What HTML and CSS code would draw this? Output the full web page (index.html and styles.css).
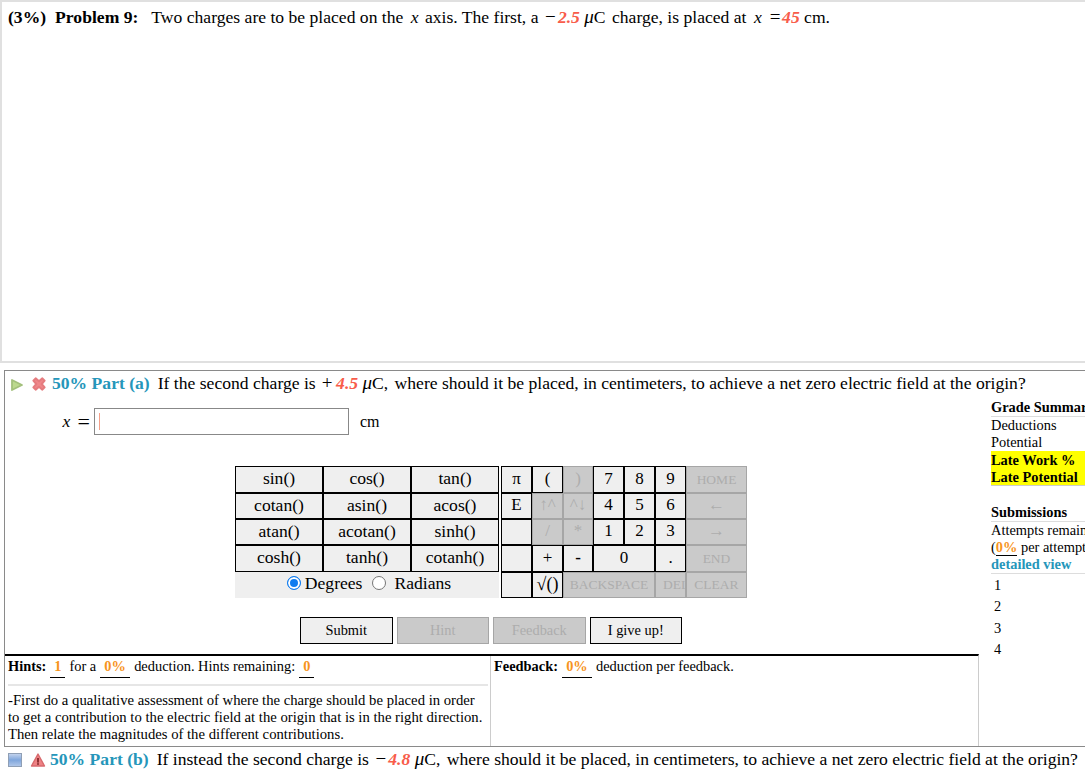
FILE: index.html
```html
<!DOCTYPE html>
<html lang="en">
<head>
<meta charset="utf-8">
<title>Problem 9</title>
<link rel="stylesheet" href="styles.css">
</head>
<body>
<div class="page">
  <section class="problem">
    <b class="pct">(3%)</b><b class="pname">Problem 9:</b><span class="ptext">Two charges are to be placed on the <i class="mx">x</i> axis. The first, a <span class="minus">−</span><i class="var">2.5</i> <span class="unit"><i class="mu">μ</i>C</span> charge, is placed at <i class="mx">x</i> <span class="eq">=</span><i class="var">45</i> cm.</span>
  </section>
  <section class="part">
    <div class="part-head">
      <svg class="icon-play" viewBox="0 0 14 14"><path d="M2 2 L12 7 L2 12 Z" fill="#bcd98e" stroke="#a3c07c" stroke-width="1.8" stroke-linejoin="round"/></svg>
      <svg class="icon-x" viewBox="0 0 16 16"><path d="M3 5 L5 3 L8 5.6 L11 3 L13 5 L10.4 8 L13 11 L11 13 L8 10.4 L5 13 L3 11 L5.6 8 Z" fill="#f0878a" stroke="#e57c7f" stroke-width="1.8" stroke-linejoin="round"/></svg>
      <b class="part-title">50% Part (a)</b><span class="part-q">If the second charge is <span class="plus">+</span><i class="var">4.5</i> <span class="unit"><i class="mu">μ</i>C,</span> where should it be placed, in centimeters, to achieve a net zero electric field at the origin?</span>
    </div>
    <div class="work">
      <div class="main">
        <div class="answer">
          <span class="ans-label"><i class="ans-x">x</i><span class="ans-eq">=</span></span>
          <div class="ans-input"><span class="caret"></span></div>
          <span class="ans-unit">cm</span>
        </div>
        <div class="calc">
          <div class="funcs">
            <div class="key">sin()</div><div class="key">cos()</div><div class="key">tan()</div>
            <div class="key">cotan()</div><div class="key">asin()</div><div class="key">acos()</div>
            <div class="key">atan()</div><div class="key">acotan()</div><div class="key">sinh()</div>
            <div class="key">cosh()</div><div class="key">tanh()</div><div class="key">cotanh()</div>
            <div class="modes">
              <span class="radio on"></span><span class="mode-a">Degrees</span><span class="radio"></span><span class="mode-b">Radians</span>
            </div>
          </div>
          <div class="pad">
            <div class="key">π</div><div class="key">(</div><div class="key off">)</div><div class="key">7</div><div class="key">8</div><div class="key">9</div><div class="key off small">HOME</div>
            <div class="key">E</div><div class="key off">↑^</div><div class="key off">^↓</div><div class="key">4</div><div class="key">5</div><div class="key">6</div><div class="key off">←</div>
            <div class="key"></div><div class="key off">/</div><div class="key off">*</div><div class="key">1</div><div class="key">2</div><div class="key">3</div><div class="key off">→</div>
            <div class="key"></div><div class="key">+</div><div class="key"><b>-</b></div><div class="key span2">0</div><div class="key">.</div><div class="key off small">END</div>
            <div class="key"></div><div class="key root">√()</div><div class="key off small span3">BACKSPACE</div><div class="key off small clip">DEL</div><div class="key off small">CLEAR</div>
          </div>
        </div>
        <div class="actions">
          <div class="btn">Submit</div>
          <div class="btn off">Hint</div>
          <div class="btn off">Feedback</div>
          <div class="btn">I give up!</div>
        </div>
        <div class="panes">
          <div class="pane-hints">
            <div class="pane-line"><b>Hints:</b><span class="blank">1</span>for a<span class="blank wide">0%</span>deduction. Hints remaining:<span class="blank">0</span></div>
            <hr class="rule">
            <p class="hint-text">-First do a qualitative assessment of where the charge should be placed in order to get a contribution to the electric field at the origin that is in the right direction. Then relate the magnitudes of the different contributions.</p>
          </div>
          <div class="pane-feedback">
            <div class="pane-line"><b>Feedback:</b><span class="blank wide">0%</span>deduction per feedback.</div>
          </div>
        </div>
      </div>
      <aside class="side">
        <div class="side-title">Grade Summary</div>
        <div class="side-row">Deductions</div>
        <div class="side-row">Potential</div>
        <div class="late"><div>Late Work %</div><div>Late Potential</div></div>
        <div class="side-title second">Submissions</div>
        <div class="side-row">Attempts remaining:</div>
        <div class="side-row">(<span class="side-pct">0%</span> per attempt)</div>
        <div class="side-link">detailed view</div>
        <div class="attempt">1</div>
        <div class="attempt">2</div>
        <div class="attempt">3</div>
        <div class="attempt">4</div>
      </aside>
    </div>
  </section>
  <section class="part-b">
    <svg class="icon-box" viewBox="0 0 14 14"><defs><linearGradient id="g" x1="0" y1="0" x2="0" y2="1"><stop offset="0" stop-color="#c7d6ee"/><stop offset="0.5" stop-color="#7fa6dc"/><stop offset="1" stop-color="#b4c9ea"/></linearGradient></defs><rect x="0.5" y="0.5" width="13" height="13" fill="url(#g)" stroke="#8f9fb5"/></svg>
    <svg class="icon-warn" viewBox="0 0 16 16"><path d="M8 2 L14.5 14 L1.5 14 Z" fill="#ee8285" stroke="#d86a6d" stroke-width="1.4" stroke-linejoin="round"/><rect x="7.2" y="6" width="1.6" height="4.6" fill="#7a2020"/><rect x="7.2" y="11.2" width="1.6" height="1.6" fill="#7a2020"/></svg>
    <b class="part-title">50% Part (b)</b><span class="part-q">If instead the second charge is <span class="minus">−</span><i class="var">4.8</i> <span class="unit"><i class="mu">μ</i>C,</span> where should it be placed, in centimeters, to achieve a net zero electric field at the origin?</span>
  </section>
</div>
</body>
</html>
```
FILE: styles.css
```css
* { box-sizing: border-box; }
html, body { margin: 0; padding: 0; height: 771px; overflow: hidden; background: #fff; }
body { font-family: "Liberation Serif", "Times New Roman", serif; color: #000; font-size: 14.4px; }
.page { width: 1085px; height: 771px; overflow: hidden; }

.problem { height: 363px; border: 2px solid #e0e0e0; border-right: 0; padding: 5px 0 0 6px; font-size: 17.6px; line-height: 20px; white-space: nowrap; }
.pct { margin-right: 9px; }
.pname { margin-right: 13px; }
.var { color: #f85c4a; font-weight: bold; }
.mx { margin: 0 2px 0 3px; }
.unit { margin-right: 2px; }
.mu { font-size: 19px; line-height: 1; }
.minus { display: inline-block; width: 15px; font-size: 19px; line-height: 1; text-align: center; }
.plus { display: inline-block; width: 14px; font-size: 19px; line-height: 1; margin-right: 2px; text-align: center; }
.eq { display: inline-block; width: 14px; font-size: 19px; line-height: 1; text-align: center; }

.part { margin: 7px 0 0 4px; width: 1090px; border: 1px solid #8a8a8a; border-right: 0; height: 377px; display: flex; flex-direction: column; }
.part-head { display: flex; align-items: center; height: 24px; padding-left: 5px; font-size: 17.6px; white-space: nowrap; }
.icon-play { width: 14px; height: 14px; flex: none; margin-top: 3px; }
.icon-x { width: 18px; height: 18px; flex: none; margin-left: 6px; margin-top: 2px; }
.part-title { color: #2596ba; margin-left: 4px; margin-right: 8px; }

.work { display: flex; flex: 1; min-height: 0; }
.main { width: 974px; flex: none; display: flex; flex-direction: column; }

.answer { display: flex; align-items: center; height: 27px; margin-top: 13px; font-size: 16px; }
.ans-label { width: 89px; display: flex; justify-content: flex-end; align-items: center; padding-right: 4px; flex: none; }
.ans-x { font-size: 17.6px; width: 15px; }
.ans-eq { font-size: 22px; line-height: 1; }
.ans-input { width: 255px; height: 27px; border: 1px solid #888; display: flex; align-items: center; padding-left: 4px; flex: none; }
.caret { width: 1px; height: 17px; background: #f5a08a; }
.ans-unit { margin-left: 11px; }

.calc { display: flex; margin: 31px 0 0 230px; font-size: 17.6px; }
.funcs { display: grid; grid-template-columns: 88px 88px 88px; grid-template-rows: 27px 26px 26px 27px 26px; width: 264px; flex: none; }
.pad { display: grid; grid-template-columns: 31px 31px 30px 31px 31px 31px 61px; grid-template-rows: 27px 26px 26px 27px 26px; margin-left: 2px; flex: none; font-size: 17px; }
.key { background: #efefef; border: 1px solid #000; display: flex; align-items: center; justify-content: center; overflow: hidden; white-space: nowrap; padding-bottom: 2px; }
.key.off { background: #cacaca; color: #adadad; border-color: #a6a6a6; }
.key.small { font-size: 13.5px; padding-bottom: 0; }
.span2 { grid-column: span 2; }
.span3 { grid-column: span 3; }
.key.clip { justify-content: flex-start; padding-left: 7px; }
.root { font-size: 18px; }
.modes { grid-column: 1 / -1; background: #efefef; display: flex; align-items: center; justify-content: center; font-size: 17.6px; padding: 0 0 4px 4px; }
.radio { width: 14px; height: 14px; border-radius: 50%; border: 1px solid #767676; background: #fff; flex: none; margin-top: -1px; }
.radio.on { border: 1.5px solid #0f7cf0; box-shadow: inset 0 0 0 2px #fff; background: #0f7cf0; }
.mode-a { margin: 0 10px 0 4px; }
.mode-b { margin-left: 8px; }

.actions { display: flex; gap: 4px; margin: 19px 0 0 295px; }
.btn { width: 92.5px; height: 27px; background: #efefef; border: 1px solid #000; display: flex; align-items: center; justify-content: center; }
.btn.off { background: #cacaca; color: #adadad; border-color: #a6a6a6; }

.panes { display: flex; margin-top: 10px; border-top: 2px solid #000; flex: 1; border-right: 1px solid #ccc; min-height: 0; }
.pane-hints { width: 486px; padding: 2px 2px 0 3px; border-right: 1px solid #ccc; flex: none; }
.pane-feedback { flex: 1; padding: 2px 0 0 3px; }
.pane-line { line-height: 17px; height: 23px; white-space: nowrap; }
.blank { display: inline-block; width: 15px; margin: 0 4px; border-bottom: 1px solid #000; color: #f7941d; font-weight: bold; text-align: center; height: 20px; }
.blank.wide { width: 30px; }
.rule { border: 0; height: 2px; background: #e6e6e6; margin: 3px 0 0; }
.hint-text { margin: 6px 0 0; line-height: 17px; width: 476px; font-size: 14.7px; }

.side { flex: none; width: 110px; margin-left: 12px; line-height: 17px; padding-top: 4px; white-space: nowrap; }
.side-title { font-weight: bold; border-bottom: 1px solid #ddd; height: 18px; }
.side-title.second { margin-top: 18px; }
.side-row { height: 17px; }
.late { background: #ff0; font-weight: bold; height: 35px; padding-top: 1px; border-bottom: 1px solid #ccc; }
.side-pct { color: #f7941d; font-weight: bold; border-bottom: 1px solid #000; }
.side-link { color: #2596ba; font-weight: bold; border-bottom: 1px solid #ddd; height: 18px; margin-bottom: 1px; }
.attempt { height: 21.3px; padding: 2px 0 0 3px; }

.part-b { display: flex; align-items: center; height: 24px; padding-left: 8px; font-size: 17.6px; white-space: nowrap; }
.icon-box { width: 14px; height: 14px; flex: none; margin-top: 1px; }
.icon-warn { width: 16px; height: 16px; flex: none; margin-left: 8px; margin-top: 1px; }
```
